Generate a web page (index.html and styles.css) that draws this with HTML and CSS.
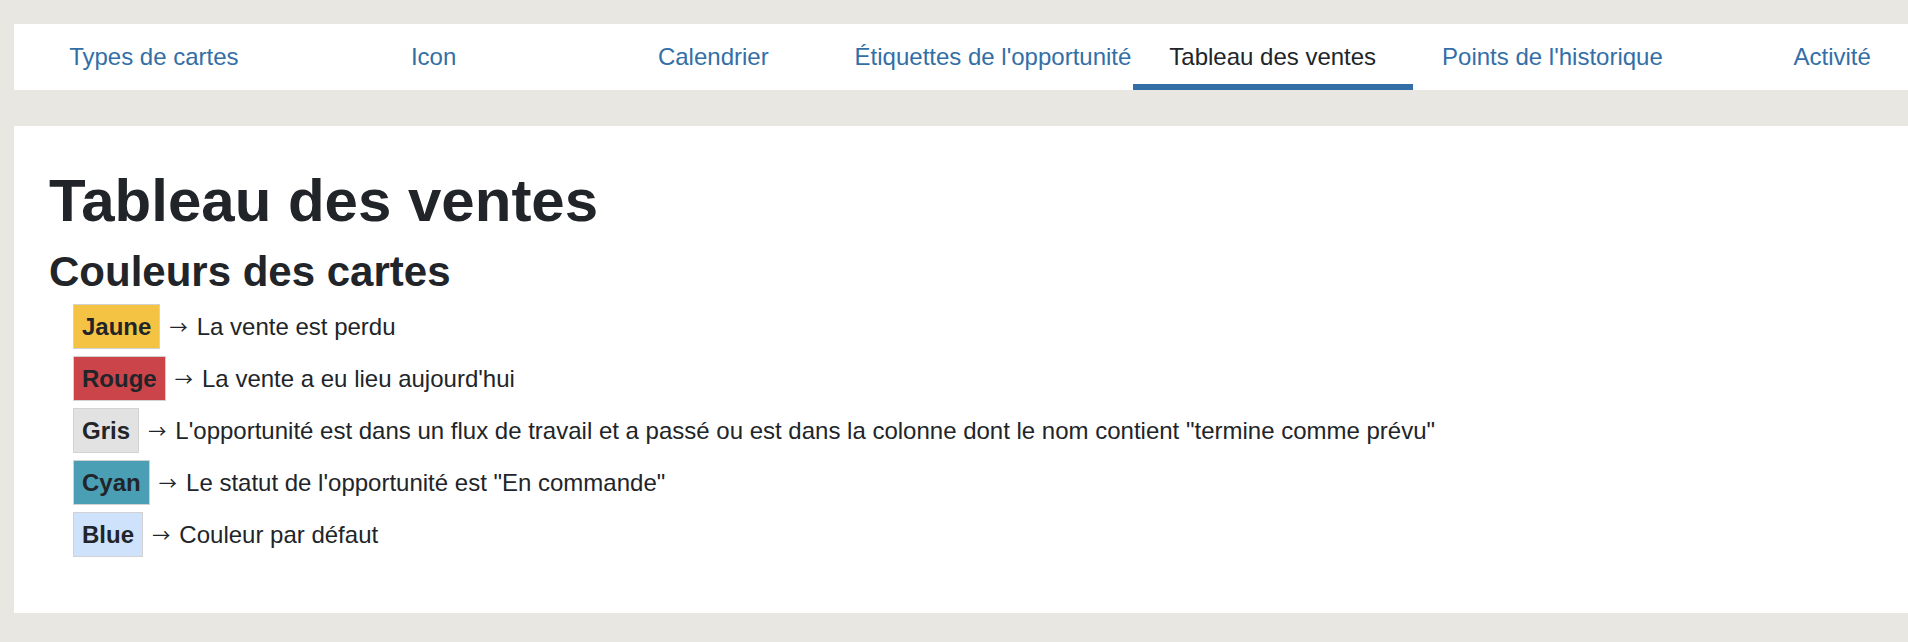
FILE: index.html
```html
<!DOCTYPE html>
<html lang="fr">
<head>
<meta charset="utf-8">
<title>Tableau des ventes</title>
<link rel="stylesheet" href="styles.css">
</head>
<body>
<div class="page">
  <nav class="tabs">
    <a class="tab" href="#">Types de cartes</a>
    <a class="tab" href="#">Icon</a>
    <a class="tab" href="#">Calendrier</a>
    <a class="tab" href="#">Étiquettes de l'opportunité</a>
    <a class="tab active" href="#">Tableau des ventes</a>
    <a class="tab" href="#">Points de l'historique</a>
    <a class="tab" href="#">Activité</a>
  </nav>
  <section class="panel">
    <h1 class="title">Tableau des ventes</h1>
    <h2 class="subtitle">Couleurs des cartes</h2>
    <ul class="legend">
      <li class="legend-row"><span class="badge badge-yellow">Jaune</span> <span class="arrow">→</span> La vente est perdu</li>
      <li class="legend-row"><span class="badge badge-red">Rouge</span> <span class="arrow">→</span> La vente a eu lieu aujourd'hui</li>
      <li class="legend-row"><span class="badge badge-grey">Gris</span> <span class="arrow">→</span> L'opportunité est dans un flux de travail et a passé ou est dans la colonne dont le nom contient "termine comme prévu"</li>
      <li class="legend-row"><span class="badge badge-cyan">Cyan</span> <span class="arrow">→</span> Le statut de l'opportunité est "En commande"</li>
      <li class="legend-row"><span class="badge badge-blue">Blue</span> <span class="arrow">→</span> Couleur par défaut</li>
    </ul>
  </section>
</div>
</body>
</html>
```

FILE: styles.css
```css
html, body {
  margin: 0;
  padding: 0;
  overflow: hidden;
}

body {
  background: #e8e7e2;
  font-family: "Liberation Sans", Helvetica, Arial, sans-serif;
  font-size: 24px;
  line-height: 1.5;
  color: #212529;
}

.page {
  width: 1958px;
  padding: 24px 0 0 14px;
}

.tabs {
  display: grid;
  grid-template-columns: repeat(7, 1fr);
  background: #ffffff;
  height: 66px;
}

.tab {
  display: block;
  padding: 15px 0 9px;
  text-align: center;
  color: #336fa6;
  text-decoration: none;
  white-space: nowrap;
  border-bottom: 6px solid transparent;
  line-height: 36px;
  height: 36px;
}

.tab.active {
  color: #212529;
  border-bottom-color: #336fa6;
}

.panel {
  margin-top: 36px;
  background: #ffffff;
  padding: 39px 0 56px 35px;
}

.title {
  margin: 0;
  font-size: 60px;
  line-height: 72px;
  font-weight: 700;
}

.subtitle {
  margin: 10px 0 7px;
  font-size: 42px;
  line-height: 50px;
  font-weight: 700;
}

.legend {
  list-style: none;
  margin: 0;
  padding: 0 0 0 24px;
}

.legend-row {
  line-height: 36px;
  margin-bottom: 7px;
}

.legend-row:last-child {
  margin-bottom: 0;
}

.badge {
  display: inline-block;
  padding: 3.5px 8px;
  border: 1px solid #d2d2d2;
  font-weight: 700;
  line-height: 36px;
  color: #212529;
}

.arrow {
  display: inline-block;
  width: 23px;
  text-align: center;
  font-family: "Noto Sans CJK JP", "DejaVu Sans", sans-serif;
  font-size: 18px;
  line-height: 36px;
  vertical-align: 1px;
}

.badge-yellow { background: #f5c343; }
.badge-red { background: #cb444a; }
.badge-grey { background: #e2e2e2; }
.badge-cyan { background: #4a9fb5; }
.badge-blue { background: #cfe2fb; }
```
